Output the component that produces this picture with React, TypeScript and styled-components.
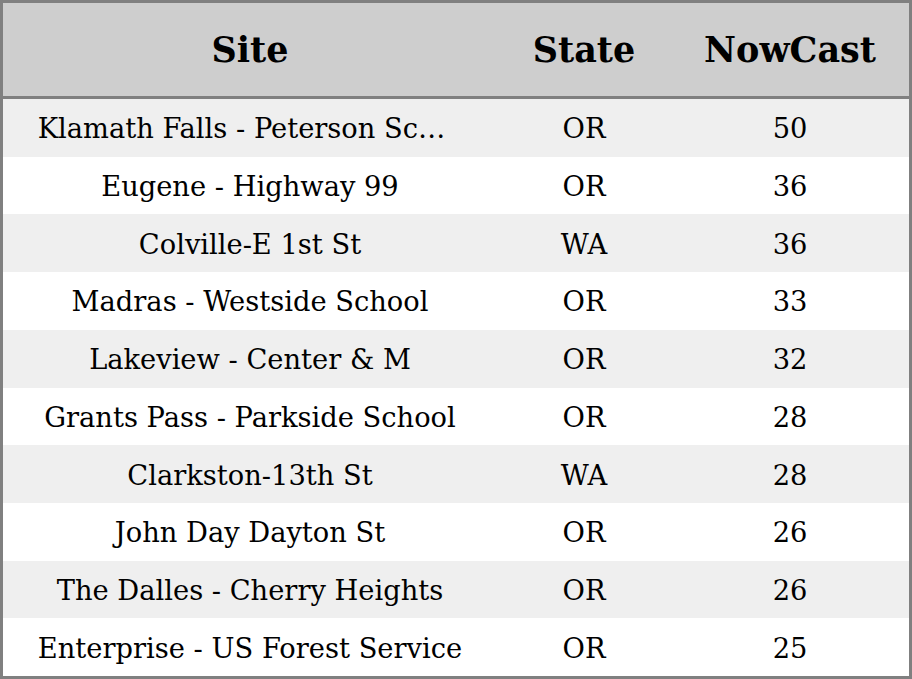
import styled, { createGlobalStyle } from "styled-components";

const GlobalStyle = createGlobalStyle`
    html, body {
        margin: 0;
        padding: 0;
        background: #ffffff;
    }
    body {
        font-family: "DejaVu Serif", serif;
        color: #000000;
    }
`;

const Frame = styled.div`
    box-sizing: border-box;
    width: 912px;
    height: 679px;
    border: 3px solid #808080;
    display: flex;
    flex-direction: column;
`;

const Columns = styled.div`
    display: grid;
    grid-template-columns: 494px 174px 1fr;
    align-items: center;
`;

const HeadRow = styled(Columns)`
    height: 93px;
    flex: 0 0 auto;
    background: #cecece;
    border-bottom: 3px solid #808080;
`;

const Row = styled(Columns)<{ $striped: boolean }>`
    flex: 1 1 0;
    background: ${(p) => (p.$striped ? "#efefef" : "#ffffff")};
`;

const HeadCell = styled.div`
    text-align: center;
    font-weight: bold;
    font-size: 35px;
`;

const Cell = styled.div<{ $wide?: boolean }>`
    text-align: center;
    font-size: 27.3px;
    padding-top: 2px;
    white-space: nowrap;
    overflow: hidden;
    text-overflow: ellipsis;
    padding-left: ${(p) => (p.$wide ? "34.7px" : "0")};
    padding-right: ${(p) => (p.$wide ? "34.7px" : "0")};
`;

type Reading = {
    site: string;
    state: string;
    nowcast: number;
};

const readings: Reading[] = [
    { site: "Klamath Falls - Peterson School", state: "OR", nowcast: 50 },
    { site: "Eugene - Highway 99", state: "OR", nowcast: 36 },
    { site: "Colville-E 1st St", state: "WA", nowcast: 36 },
    { site: "Madras - Westside School", state: "OR", nowcast: 33 },
    { site: "Lakeview - Center & M", state: "OR", nowcast: 32 },
    { site: "Grants Pass - Parkside School", state: "OR", nowcast: 28 },
    { site: "Clarkston-13th St", state: "WA", nowcast: 28 },
    { site: "John Day Dayton St", state: "OR", nowcast: 26 },
    { site: "The Dalles - Cherry Heights", state: "OR", nowcast: 26 },
    { site: "Enterprise - US Forest Service", state: "OR", nowcast: 25 },
];

const App = () => {
    return (
        <>
            <GlobalStyle />
            <Frame>
                <HeadRow>
                    <HeadCell>Site</HeadCell>
                    <HeadCell>State</HeadCell>
                    <HeadCell>NowCast</HeadCell>
                </HeadRow>
                {readings.map((r, i) => (
                    <Row key={r.site} $striped={i % 2 === 0}>
                        <Cell $wide>{r.site}</Cell>
                        <Cell>{r.state}</Cell>
                        <Cell>{r.nowcast}</Cell>
                    </Row>
                ))}
            </Frame>
        </>
    );
};

export default App;
